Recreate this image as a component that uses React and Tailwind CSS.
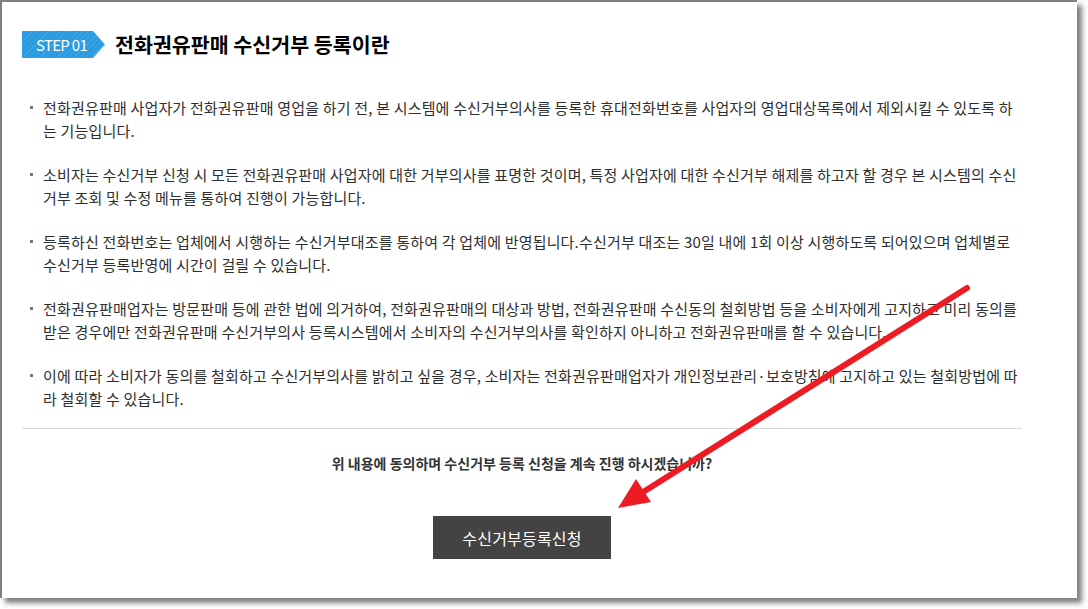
import React from "react";

const items = [
  [
    "전화권유판매 사업자가 전화권유판매 영업을 하기 전, 본 시스템에 수신거부의사를 등록한 휴대전화번호를 사업자의 영업대상목록에서 제외시킬 수 있도록 하",
    "는 기능입니다.",
  ],
  [
    "소비자는 수신거부 신청 시 모든 전화권유판매 사업자에 대한 거부의사를 표명한 것이며, 특정 사업자에 대한 수신거부 해제를 하고자 할 경우 본 시스템의 수신",
    "거부 조회 및 수정 메뉴를 통하여 진행이 가능합니다.",
  ],
  [
    "등록하신 전화번호는 업체에서 시행하는 수신거부대조를 통하여 각 업체에 반영됩니다.수신거부 대조는 30일 내에 1회 이상 시행하도록 되어있으며 업체별로",
    "수신거부 등록반영에 시간이 걸릴 수 있습니다.",
  ],
  [
    "전화권유판매업자는 방문판매 등에 관한 법에 의거하여, 전화권유판매의 대상과 방법, 전화권유판매 수신동의 철회방법 등을 소비자에게 고지하고 미리 동의를",
    "받은 경우에만 전화권유판매 수신거부의사 등록시스템에서 소비자의 수신거부의사를 확인하지 아니하고 전화권유판매를 할 수 있습니다.",
  ],
  [
    "이에 따라 소비자가 동의를 철회하고 수신거부의사를 밝히고 싶을 경우, 소비자는 전화권유판매업자가 개인정보관리·보호방침에 고지하고 있는 철회방법에 따",
    "라 철회할 수 있습니다.",
  ],
];

export default function App() {
  return (
    <div
      className="relative w-[1088px] h-[609px] bg-white overflow-hidden"
      style={{ fontFamily: '"Noto Sans CJK KR", "Noto Sans", sans-serif' }}
    >
      <div className="w-[1077px] h-[598px] bg-white border-t-2 border-l-2 border-[#808080] shadow-[5px_5px_5px_rgba(0,0,0,0.5)] pl-[20px] pt-[29px]">
        <div className="w-[1000px] flex flex-col">
          {/* Title */}
          <div className="flex items-center h-[27px]">
            <div className="w-[83px] h-[27px] flex items-center pl-[14px] text-white text-[15px] leading-none tracking-[-0.7px] bg-[repeating-linear-gradient(135deg,#2b9be0_0px,#2b9be0_3px,#3ba6e6_3px,#3ba6e6_4px)] [clip-path:polygon(0_0,71px_0,83px_50%,71px_100%,0_100%)]">
              STEP 01
            </div>
            <h1 className="ml-[10px] text-[20.6px] font-bold text-black leading-none">
              전화권유판매 수신거부 등록이란
            </h1>
          </div>

          {/* Items */}
          <ul className="mt-[38px] flex flex-col gap-[21px]">
            {items.map((lines, i) => (
              <li key={i} className="relative pl-[21px] text-[15px] leading-[23px] tracking-[0.18px] text-[#2e2e2e]">
                <span className="absolute left-[8px] top-[10px] w-[3px] h-[3px] bg-[#777]" />
                {lines.map((l, j) => (
                  <div key={j} className="whitespace-nowrap">
                    {l}
                  </div>
                ))}
              </li>
            ))}
          </ul>

          <div className="mt-[18px] h-px bg-[#d9d9d9]" />

          <p className="mt-[24px] text-center text-[14px] leading-[20px] font-bold text-[#333]">
            위 내용에 동의하며 수신거부 등록 신청을 계속 진행 하시겠습니까?
          </p>

          <div className="mt-[43px] flex justify-center">
            <button className="w-[178px] h-[43px] bg-[#434343] text-white text-[16px] leading-none tracking-[0.2px]">
              수신거부등록신청
            </button>
          </div>
        </div>
      </div>

      {/* Red arrow annotation */}
      <svg className="absolute left-0 top-0 pointer-events-none" width="1088" height="609">
        <line x1="967" y1="288" x2="640" y2="494" stroke="#ed1c24" strokeWidth="6" strokeLinecap="round" />
        <polygon points="618,508 636,479 651,502" fill="#ed1c24" />
      </svg>
    </div>
  );
}
